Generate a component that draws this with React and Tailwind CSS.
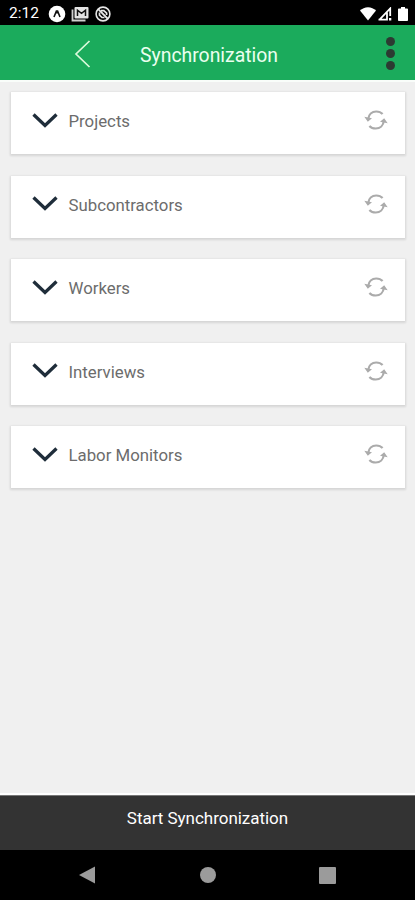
import React from 'react';

const sections = ['Projects', 'Subcontractors', 'Workers', 'Interviews', 'Labor Monitors'];

const StatusBar = () => (
    <div className="flex h-[25px] shrink-0 items-center bg-black pt-0.5 pl-[9px] pr-[7px] text-white">
        <span className="mt-px w-[39px] text-[15.5px] leading-none whitespace-nowrap">2:12</span>
        <svg className="h-[18px] w-[18px]" viewBox="0 0 18 18">
            <circle cx="9" cy="9" r="8.3" fill="#fff" />
            <path d="M6 12 8.4 6h1.2L12 12M9 6v2.5" fill="none" stroke="#111" strokeWidth="1.6" />
        </svg>
        <svg className="ml-[5px] h-[16px] w-[18px]" viewBox="0 0 18 16" fill="none">
            <path d="M1.5 3.5v11h13" stroke="#cfcfcf" strokeWidth="1.8" />
            <rect x="3.5" y="1" width="14" height="11.5" rx="1" fill="#e4e4e4" />
            <path d="M6.5 10V4.2l4 3.2 4-3.2V10" stroke="#111" strokeWidth="1.5" />
        </svg>
        <svg className="ml-[6px] h-[16px] w-[16px]" viewBox="0 0 16 16" fill="none" stroke="#e6e6e6">
            <circle cx="8" cy="8" r="6.9" strokeWidth="1.6" />
            <path d="M3.2 3.2 13 13" strokeWidth="1.8" />
            <path d="M6 4.6h2.8l2.8 2.5v1.8M4.5 6.500v2.600L7 11.500h2.500" strokeWidth="1.7" />
        </svg>
        <svg className="ml-auto h-[14px] w-[16px]" viewBox="0 0 16 14" fill="#fff">
            <path d="M0 3.6C2 1.6 5 .3 8 .3s6 1.3 8 3.3L8 13.6z" />
        </svg>
        <svg className="ml-[2px] h-[14px] w-[14px]" viewBox="0 0 14 14">
            <path d="M1.5 12.7 12.2 1.5V9M.5 12.7H9V5.5" fill="none" stroke="#fff" strokeWidth="1.8" />
            <path d="M11 11h2.3v2.5H11z" fill="#fff" />
        </svg>
        <svg className="ml-[6px] h-[14px] w-[10px]" viewBox="0 0 10 14" fill="#fff">
            <path d="M3 0h4v1.5h2.2c.4 0 .8.3.8.8v10.9c0 .5-.4.8-.8.8H.8c-.4 0-.8-.3-.8-.8V2.3c0-.5.4-.8.8-.8H3z" />
        </svg>
    </div>
);

const Header = () => (
    <header className="flex h-[55px] shrink-0 items-center bg-[#1bab5c] pl-[74px] pr-[20.5px]">
        <svg className="mt-[2px] h-[28px] w-[17px]" viewBox="0 0 17 28" fill="none">
            <path d="M15.5 1 2 14l13.5 13" stroke="#dcfadc" strokeWidth="1.7" />
        </svg>
        <h1 className="ml-[49px] mt-[7px] text-[19.4px] leading-6 text-[#eaffef]">Synchronization</h1>
        <div className="ml-auto mt-[2px] flex flex-col gap-[3px]">
            <span className="h-[9px] w-[9px] rounded-full bg-[#2c3a32]" />
            <span className="h-[9px] w-[9px] rounded-full bg-[#2c3a32]" />
            <span className="h-[9px] w-[9px] rounded-full bg-[#2c3a32]" />
        </div>
    </header>
);

const SyncIcon = () => (
    <svg className="h-[20px] w-[24px]" viewBox="0 0 24 20" fill="none" stroke="#ababab" strokeWidth="2.2">
        <path d="M4.2 9C4.7 4.500 8 1.5 12.2 1.5c2.300 0 4.900.9 6.400 2.600" />
        <path d="M19.8 11c-.5 4.500-3.800 7.500-8 7.500-2.300 0-4.900-.9-6.400-2.600" />
        <path d="M.3 6.8 8 8.2 3.8 11.8zM23.7 13.2 16 11.8l4.200-3.600z" fill="#ababab" stroke="none" />
    </svg>
);

const SectionCard = ({ title }) => (
    <div className="flex h-[62px] items-center bg-white pl-[21px] pr-[17px] shadow-[0_1px_2px_1px_rgba(0,0,0,0.11)]">
        <svg className="mb-[5px] h-[16px] w-[26px]" viewBox="0 0 26 16" fill="none">
            <path d="M1.5 1.5 13 12.5 24.5 1.5" stroke="#1f2d3a" strokeWidth="3.3" />
        </svg>
        <span className="ml-[11px] mb-[4px] text-[16.8px] leading-5 text-[#6c6c6c]">{title}</span>
        <span className="ml-auto mb-[6px]">
            <SyncIcon />
        </span>
    </div>
);

const NavBar = () => (
    <nav className="flex h-[50px] shrink-0 items-center justify-between bg-black px-[79px]">
        <svg className="h-[18px] w-[17px]" viewBox="0 0 17 18" fill="#9b9b9b">
            <path d="M0 9 16 .5v17z" />
        </svg>
        <span className="h-[16px] w-[16px] rounded-full bg-[#9b9b9b]" />
        <span className="h-[17px] w-[17px] rounded-[1px] bg-[#9b9b9b]" />
    </nav>
);

export default function App() {
    return (
        <div className="flex h-[900px] w-[415px] flex-col overflow-hidden bg-[#f0f0f0] font-['Roboto',sans-serif]">
            <StatusBar />
            <Header />
            <main className="flex flex-1 flex-col gap-[21.5px] border-y-2 border-t-[#f9fdfa] border-b-white px-[10.5px] pt-[10px]">
                {sections.map((title) => (
                    <SectionCard key={title} title={title} />
                ))}
            </main>
            <button
                type="button"
                className="flex h-[55px] shrink-0 justify-center border-t border-[#777] bg-[#333] pt-[12px] text-[17px] leading-5 tracking-[-0.03px] text-white"
            >
                Start Synchronization
            </button>
            <NavBar />
        </div>
    );
}
